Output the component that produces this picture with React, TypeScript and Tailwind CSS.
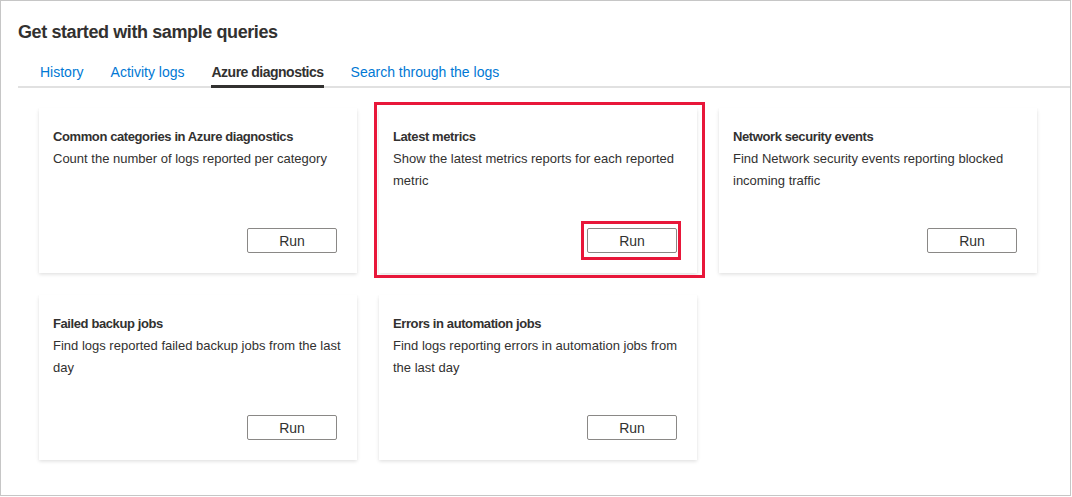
import React, { useState } from 'react';

interface Query {
  title: string;
  description: string;
  highlighted?: boolean;
}

const tabs = ['History', 'Activity logs', 'Azure diagnostics', 'Search through the logs'];

const queries: Query[] = [
  { title: 'Common categories in Azure diagnostics', description: 'Count the number of logs reported per category' },
  { title: 'Latest metrics', description: 'Show the latest metrics reports for each reported metric', highlighted: true },
  { title: 'Network security events', description: 'Find Network security events reporting blocked incoming traffic' },
  { title: 'Failed backup jobs', description: 'Find logs reported failed backup jobs from the last day' },
  { title: 'Errors in automation jobs', description: 'Find logs reporting errors in automation jobs from the last day' },
];

const QueryCard: React.FC<{ query: Query }> = ({ query }) => (
  <div className="relative flex h-[165px] flex-col bg-white pt-[18px] pr-[14px] pb-[20px] pl-[14px] shadow-[0_1.6px_3.6px_0_rgba(0,0,0,0.13),0_0.3px_0.9px_0_rgba(0,0,0,0.11)]">
    <div className="text-[13px] font-bold leading-[22px] tracking-[-0.4px] text-[#323130]">{query.title}</div>
    <div className="text-[13px] leading-[22px] text-[#323130]">{query.description}</div>
    <div className="relative mt-auto mr-[6px] self-end">
      <button className="h-[25px] w-[90px] rounded-[2px] border border-[#8a8886] bg-white pt-px text-[14px] leading-[22px] text-[#323130]">
        Run
      </button>
      {query.highlighted && (
        <div className="pointer-events-none absolute -top-[7px] -right-[4px] -bottom-[7px] -left-[6px] border-[3px] border-[#e8173a]" />
      )}
    </div>
    {query.highlighted && (
      <div className="pointer-events-none absolute -top-[6px] -right-[8px] -bottom-[5px] -left-[5px] border-[3px] border-[#e8173a]" />
    )}
  </div>
);

export default function App() {
  const [active, setActive] = useState('Azure diagnostics');

  return (
    <div className="h-[497px] w-[1072px] bg-white font-['Liberation_Sans',Arial,sans-serif]">
      <div className="h-[496px] w-[1071px] border border-[#c6c6c6] pt-[19px] pl-[17px]">
        <h2 className="text-[18px] font-bold leading-[24px] tracking-[-0.4px] text-[#323130]">
          Get started with sample queries
        </h2>

        <div className="mt-[18px] flex gap-[27px] border-b-2 border-[#e1e1e1] pl-[22px]">
          {tabs.map(tab => (
            <button
              key={tab}
              onClick={() => setActive(tab)}
              className={`relative pb-[4px] text-[14px] leading-[20px] ${
                tab === active ? 'font-bold tracking-[-0.5px] text-[#323130]' : 'text-[#0078d4]'
              }`}
            >
              {tab}
              {tab === active && <span className="absolute right-0 -bottom-[2px] left-0 h-[3px] bg-[#323130]" />}
            </button>
          ))}
        </div>

        <div className="mt-[20px] ml-[21px] grid grid-cols-[repeat(3,318px)] gap-[22px]">
          {queries.map(q => (
            <QueryCard key={q.title} query={q} />
          ))}
        </div>
      </div>
    </div>
  );
}
